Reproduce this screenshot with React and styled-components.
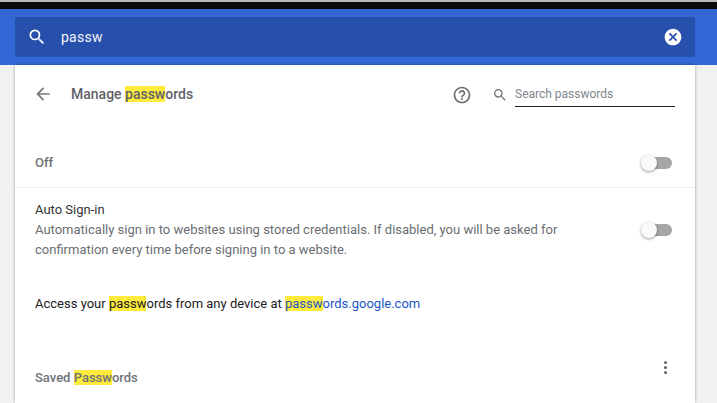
import React from 'react';
import styled, { createGlobalStyle } from 'styled-components';

const Global = createGlobalStyle`
  html, body { margin: 0; padding: 0; background: #f1f1f1; }
  body { font-family: Roboto, "Liberation Sans", sans-serif; width: 717px; height: 403px; overflow: hidden; }
`;
const Page = styled.div`
  width: 717px; height: 403px; overflow: hidden; display: flex; flex-direction: column; background: #f1f1f1;
`;
const TopEdge = styled.div`
  height: 9px; flex: none; box-sizing: border-box; background: #0a0a0a; border-top: 2px solid #b9b9b9;
`;
const Header = styled.header`
  height: 56px; flex: none; box-sizing: border-box; background: #3367d6; padding: 8px 22px 8px 15px; display: flex;
`;
const SearchField = styled.div`
  flex: 1; background: #2750ac; border-radius: 2px; display: flex; align-items: center; padding: 0 12px; color: #fff;
`;
const Query = styled.span`
  font-size: 14px; letter-spacing: .25px; margin-left: 14px; flex: 1; color: #f2f5fb;
`;
const Card = styled.main`
  flex: 1; width: 680px; margin-left: 15px; background: #fff; box-shadow: 0 0 3px rgba(0,0,0,.35);
  display: flex; flex-direction: column;
`;
const TitleRow = styled.div`
  height: 57px; flex: none; display: flex; align-items: center; padding: 0 20px 0 18px;
`;
const Title = styled.h1`
  margin: 0 0 0 18px; font-size: 14px; font-weight: 500; color: #5f6368; flex: 1;
`;
const Mark = styled.mark`
  background: #ffeb3b; color: inherit;
`;
const HelpGlyph = styled.svg`
  margin-top: 3px; fill: #6e6e6e;
`;
const InlineSearch = styled.div`
  display: flex; align-items: center; margin-left: 20px;
`;
const SmallSearchGlyph = styled.svg`
  margin-top: 2px; fill: #757575;
`;
const SearchInputLook = styled.div`
  width: 160px; height: 27px; margin-left: 7px; box-sizing: border-box; border-bottom: 1px solid #202124; font-size: 12px; color: #80868b;
  display: flex; align-items: center; padding-top: 2px;
`;
const Row = styled.div`
  display: flex; align-items: ${p => p.$top ? 'flex-start' : 'center'}; justify-content: space-between; padding: 0 23px 0 20px;
`;
const OffRow = styled(Row)`
  height: 59px; margin-top: 7px; box-sizing: border-box; border-bottom: 1px solid #f0f0f0; padding-top: 9px;
`;
const AutoRow = styled(Row)`
  padding-top: 12px; height: 104px; box-sizing: border-box;
`;
const RowLabel = styled.div`
  font-size: 13px; font-weight: 500; color: #6f7276;
`;
const AutoText = styled.div`
  width: 560px; font-size: 13px; line-height: 20px; color: #6a6e72;
`;
const AutoTitle = styled.div`
  color: #333;
`;
const Toggle = styled.div`
  position: relative; width: 26px; height: 12px; border-radius: 6px; background: #a6a6a6; flex: none;
  &::after {
    content: ''; position: absolute; left: -5px; top: -2px; width: 16px; height: 16px; border-radius: 50%;
    background: #fafafa; box-shadow: 0 1px 3px rgba(0,0,0,.4);
  }
`;
const AutoToggle = styled(Toggle)`
  margin-top: 24px;
`;
const AccessRow = styled.div`
  padding: 0 20px; font-size: 13px; color: #202124; line-height: 20px; margin-top: 2px;
`;
const GLink = styled.a`
  color: #1a56c9; text-decoration: none;
`;
const SavedRow = styled(Row)`
  margin-top: 53px; height: 20px;
`;
const Dots = styled.div`
  display: flex; flex-direction: column; gap: 2px; margin-right: 5px; margin-top: -19px;
`;
const Dot = styled.span`
  width: 3px; height: 3px; border-radius: 50%; background: #5f6368;
`;

const searchPath = 'M15.5 14h-.79l-.28-.27A6.47 6.47 0 0 0 16 9.5 6.5 6.5 0 1 0 9.5 16c1.61 0 3.09-.59 4.23-1.57l.27.28v.79l5 4.99L20.49 19l-4.99-5zm-6 0C7.01 14 5 11.99 5 9.5S7.01 5 9.5 5 14 7.01 14 9.5 11.99 14 9.5 14z';

export default function App() {
  return (
    <Page>
      <Global />
      <TopEdge />
      <Header>
        <SearchField>
          <svg width="20" height="20" viewBox="0 0 24 24" fill="#fff"><path d={searchPath} /></svg>
          <Query>passw</Query>
          <svg width="20" height="20" viewBox="0 0 24 24" fill="#fff">
            <path d="M12 2C6.47 2 2 6.47 2 12s4.47 10 10 10 10-4.47 10-10S17.53 2 12 2zm5 13.59L15.59 17 12 13.41 8.41 17 7 15.59 10.59 12 7 8.41 8.41 7 12 10.59 15.59 7 17 8.41 13.41 12 17 15.59z" />
          </svg>
        </SearchField>
      </Header>
      <Card>
        <TitleRow>
          <svg width="20" height="20" viewBox="0 0 24 24" fill="#757575">
            <path d="M20 11H7.83l5.59-5.59L12 4l-8 8 8 8 1.41-1.41L7.83 13H20v-2z" />
          </svg>
          <Title>Manage <Mark>passw</Mark>ords</Title>
          <HelpGlyph width="20" height="20" viewBox="0 0 24 24">
            <path d="M11 18h2v-2h-2v2zm1-16C6.48 2 2 6.48 2 12s4.48 10 10 10 10-4.48 10-10S17.52 2 12 2zm0 18c-4.41 0-8-3.59-8-8s3.59-8 8-8 8 3.59 8 8-3.59 8-8 8zm0-14c-2.21 0-4 1.79-4 4h2c0-1.1.9-2 2-2s2 .9 2 2c0 2-3 1.75-3 5h2c0-2.25 3-2.5 3-5 0-2.21-1.79-4-4-4z" />
          </HelpGlyph>
          <InlineSearch>
            <SmallSearchGlyph width="16" height="16" viewBox="0 0 24 24"><path d={searchPath} /></SmallSearchGlyph>
            <SearchInputLook>Search passwords</SearchInputLook>
          </InlineSearch>
        </TitleRow>
        <OffRow>
          <RowLabel>Off</RowLabel>
          <Toggle />
        </OffRow>
        <AutoRow $top>
          <AutoText>
            <AutoTitle>Auto Sign-in</AutoTitle>
            Automatically sign in to websites using stored credentials. If disabled, you will be asked for confirmation every time before signing in to a website.
          </AutoText>
          <AutoToggle />
        </AutoRow>
        <AccessRow>
          Access your <Mark>passw</Mark>ords from any device at <GLink><Mark>passw</Mark>ords.google.com</GLink>
        </AccessRow>
        <SavedRow>
          <RowLabel>Saved <Mark>Passw</Mark>ords</RowLabel>
          <Dots><Dot /><Dot /><Dot /></Dots>
        </SavedRow>
      </Card>
    </Page>
  );
}
